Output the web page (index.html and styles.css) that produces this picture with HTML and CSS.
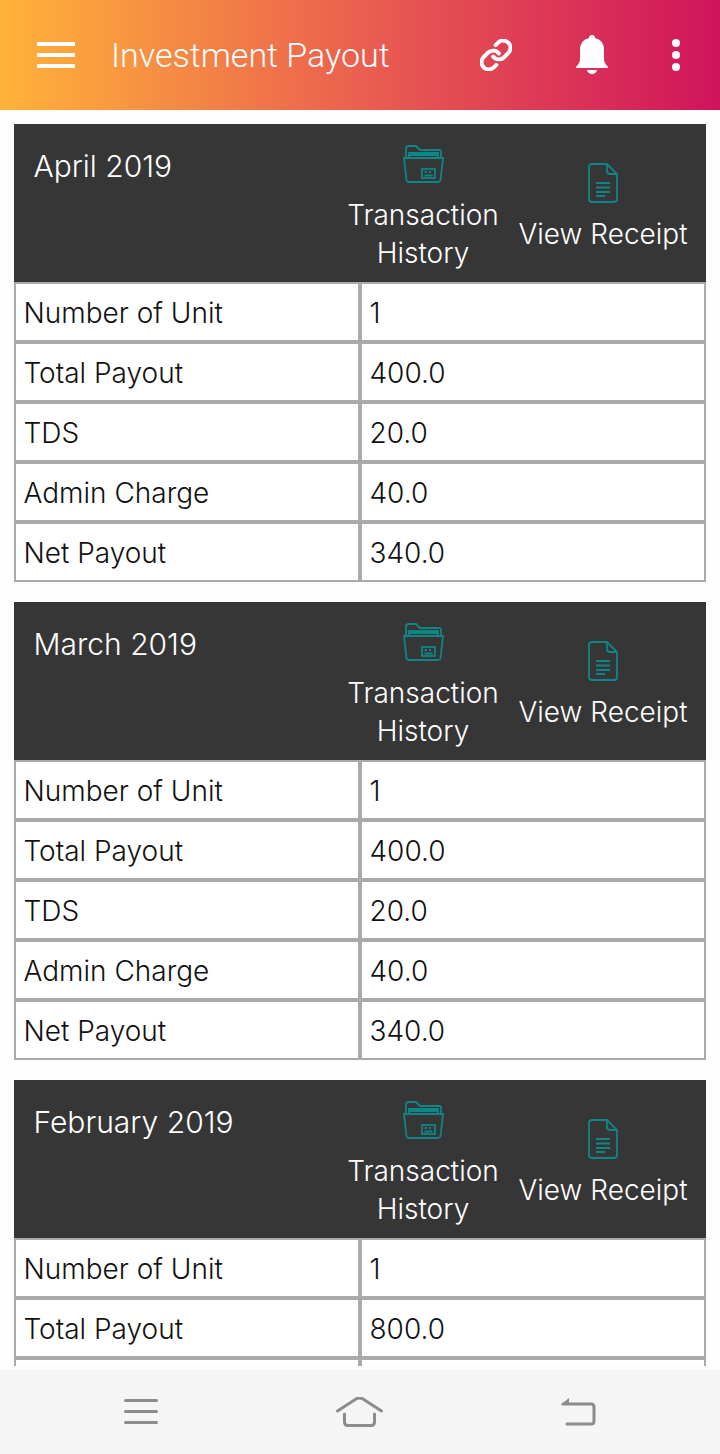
FILE: index.html
```html
<!DOCTYPE html>
<html lang="en">

<head>
    <meta charset="UTF-8" />
    <meta name="viewport" content="width=device-width, initial-scale=1.0" />
    <title>Investment Payout</title>
    <link rel="stylesheet" href="styles.css">
</head>

<body>
    <svg class="icon-defs" width="0" height="0">
        <symbol id="folder" viewBox="0 0 41 38">
            <path d="M3 12V3.500Q3 1 5.500 1H13L17 5H36Q38 5 38 7V12" />
            <path d="M6 12V8H35V12M5 10H36" />
            <path d="M1 13H40L37.500 35Q37.300 37 35 37H6Q3.700 37 3.500 35Z" />
            <rect x="19" y="24" width="13" height="9" />
            <path d="M21.500 27H24M26 27H28M21.500 30.500H29.500" />
        </symbol>
        <symbol id="doc" viewBox="0 0 30 40">
            <path d="M4 1H19L29 11V36Q29 39 26 39H4Q1 39 1 36V4Q1 1 4 1Z" />
            <path d="M19 1V8Q19 11 22 11H29" />
            <path d="M8 20H22M8 24.500H22M8 29H22M8 33H17" />
        </symbol>
    </svg>

    <div class="app">
        <header class="topbar">
            <div class="burger"><span></span><span></span><span></span></div>
            <h1>Investment Payout</h1>
            <svg class="top-icon link-icon" viewBox="1 1 22 22">
                <path d="M10 13a5 5 0 0 0 7.540.540l3-3a5 5 0 0 0-7.070-7.070l-1.720 1.710" />
                <path d="M14 11a5 5 0 0 0-7.540-.540l-3 3a5 5 0 0 0 7.070 7.070l1.710-1.710" />
            </svg>
            <svg class="top-icon bell-icon" viewBox="0 0 34 40">
                <path d="M17 0Q20 0 20 3Q29 5 29 15V24Q29 28 33 32V33H1V32Q5 28 5 24V15Q5 5 14 3Q14 0 17 0Z" />
                <path d="M12 35H22Q21 39 17 39 13 39 12 35Z" />
            </svg>
            <div class="dots"><span></span><span></span><span></span></div>
        </header>

        <main class="list">
            <section class="card">
                <div class="card-head">
                    <h2>April 2019</h2>
                    <a class="action history"><svg class="folder-icon"><use href="#folder" /></svg>Transaction<br>History</a>
                    <a class="action receipt"><svg class="doc-icon"><use href="#doc" /></svg>View Receipt</a>
                </div>
                <table>
                    <tr><td>Number of Unit</td><td>1</td></tr>
                    <tr><td>Total Payout</td><td>400.0</td></tr>
                    <tr><td>TDS</td><td>20.0</td></tr>
                    <tr><td>Admin Charge</td><td>40.0</td></tr>
                    <tr><td>Net Payout</td><td>340.0</td></tr>
                </table>
            </section>

            <section class="card">
                <div class="card-head">
                    <h2>March 2019</h2>
                    <a class="action history"><svg class="folder-icon"><use href="#folder" /></svg>Transaction<br>History</a>
                    <a class="action receipt"><svg class="doc-icon"><use href="#doc" /></svg>View Receipt</a>
                </div>
                <table>
                    <tr><td>Number of Unit</td><td>1</td></tr>
                    <tr><td>Total Payout</td><td>400.0</td></tr>
                    <tr><td>TDS</td><td>20.0</td></tr>
                    <tr><td>Admin Charge</td><td>40.0</td></tr>
                    <tr><td>Net Payout</td><td>340.0</td></tr>
                </table>
            </section>

            <section class="card">
                <div class="card-head">
                    <h2>February 2019</h2>
                    <a class="action history"><svg class="folder-icon"><use href="#folder" /></svg>Transaction<br>History</a>
                    <a class="action receipt"><svg class="doc-icon"><use href="#doc" /></svg>View Receipt</a>
                </div>
                <table>
                    <tr><td>Number of Unit</td><td>1</td></tr>
                    <tr><td>Total Payout</td><td>800.0</td></tr>
                    <tr><td>TDS</td><td>40.0</td></tr>
                    <tr><td>Admin Charge</td><td>80.0</td></tr>
                    <tr><td>Net Payout</td><td>680.0</td></tr>
                </table>
            </section>
        </main>

        <nav class="softkeys">
            <svg viewBox="0 0 34 26" class="key key-menu">
                <path d="M1.500 1.500H32.500M1.500 12.500H32.500M1.500 23.500H32.500" />
            </svg>
            <svg viewBox="0 0 47 30" class="key key-home">
                <path d="M1.500 14 20 2Q23.500 0 27 2L45.500 14" />
                <path d="M8.500 17V25Q8.500 28.500 12 28.500H35Q38.500 28.500 38.500 25V17" />
            </svg>
            <svg viewBox="0 0 35 28" class="key key-back">
                <path class="solid" d="M0 6.500 8 0V6.500Z" />
                <path d="M2 6H30Q33 6 33 9V23Q33 26 30 26H6" />
            </svg>
        </nav>
    </div>
</body>

</html>
```

FILE: styles.css
```css
* {
    box-sizing: border-box;
}

html,
body {
    margin: 0;
    height: 100%;
}

body {
    background-color: #fdfdfd;
    font-family: Inter, "Liberation Sans", sans-serif;
    font-weight: 300;
    overflow: hidden;
}

.icon-defs {
    position: absolute;
}

.app {
    display: flex;
    flex-direction: column;
    height: 100vh;
}

.topbar {
    flex: 0 0 110px;
    display: flex;
    align-items: center;
    padding-left: 37px;
    color: white;
    background: linear-gradient(to right, #ffb339, #ea5f50 50%, #d0145c);
}

.burger {
    width: 38px;
    display: flex;
    flex-direction: column;
    gap: 7px;
}

.burger span {
    height: 4px;
    background-color: white;
}

.topbar h1 {
    flex: 1;
    margin: 0 0 0 36px;
    font-family: Roboto, sans-serif;
    font-size: 34px;
    font-weight: 300;
}

.top-icon {
    display: block;
}

.link-icon {
    width: 32px;
    height: 32px;
    fill: none;
    stroke: white;
    stroke-width: 2.700;
    stroke-linecap: round;
    stroke-linejoin: round;
    margin-right: 63px;
}

.bell-icon {
    width: 34px;
    height: 40px;
    fill: white;
    margin-right: 63px;
}

.dots {
    display: flex;
    flex-direction: column;
    gap: 4px;
    margin-right: 40px;
}

.dots span {
    width: 8px;
    height: 8px;
    border-radius: 50%;
    background-color: white;
}

.list {
    flex: 1;
    min-height: 0;
    overflow: hidden;
    margin-bottom: 4px;
    padding: 14px 14px 0;
}

.card {
    margin-bottom: 20px;
}

.card-head {
    display: flex;
    align-items: flex-start;
    height: 158px;
    background-color: #363636;
    color: white;
    font-size: 28px;
    line-height: 38px;
}

.card-head h2 {
    flex: 1;
    margin: 23px 0 0 19.500px;
    font-size: 30px;
    font-weight: 300;
}

.action {
    display: block;
    text-align: center;
}

.action svg {
    display: block;
    margin: 0 auto;
    fill: none;
    stroke: #0f8585;
    stroke-width: 1.800;
}

.history {
    width: 170px;
    margin-top: 21px;
    margin-right: 2px;
}

.folder-icon {
    width: 41px;
    height: 38px;
    margin-bottom: 13px !important;
}

.receipt {
    width: 186px;
    margin-top: 39px;
    margin-right: 10px;
}

.doc-icon {
    width: 30px;
    height: 40px;
    margin-bottom: 12px !important;
}

table {
    width: 100%;
    table-layout: fixed;
    border-collapse: separate;
    border-spacing: 0;
    background-color: white;
    color: #111;
    font-size: 28px;
}

td {
    height: 60px;
    padding: 2px 8px 0 7.500px;
    border: 2px solid #aaa;
}

.softkeys {
    flex: 0 0 84px;
    display: flex;
    align-items: center;
    justify-content: center;
    gap: 178px;
    background-color: #f5f5f5;
}

.key {
    display: block;
    fill: none;
    stroke: #8c8c8c;
    stroke-width: 3;
    stroke-linecap: round;
}

.key .solid {
    fill: #8c8c8c;
    stroke: none;
}

.key-menu {
    width: 34px;
    height: 26px;
}

.key-home {
    width: 47px;
    height: 30px;
}

.key-back {
    width: 35px;
    height: 28px;
}
```
